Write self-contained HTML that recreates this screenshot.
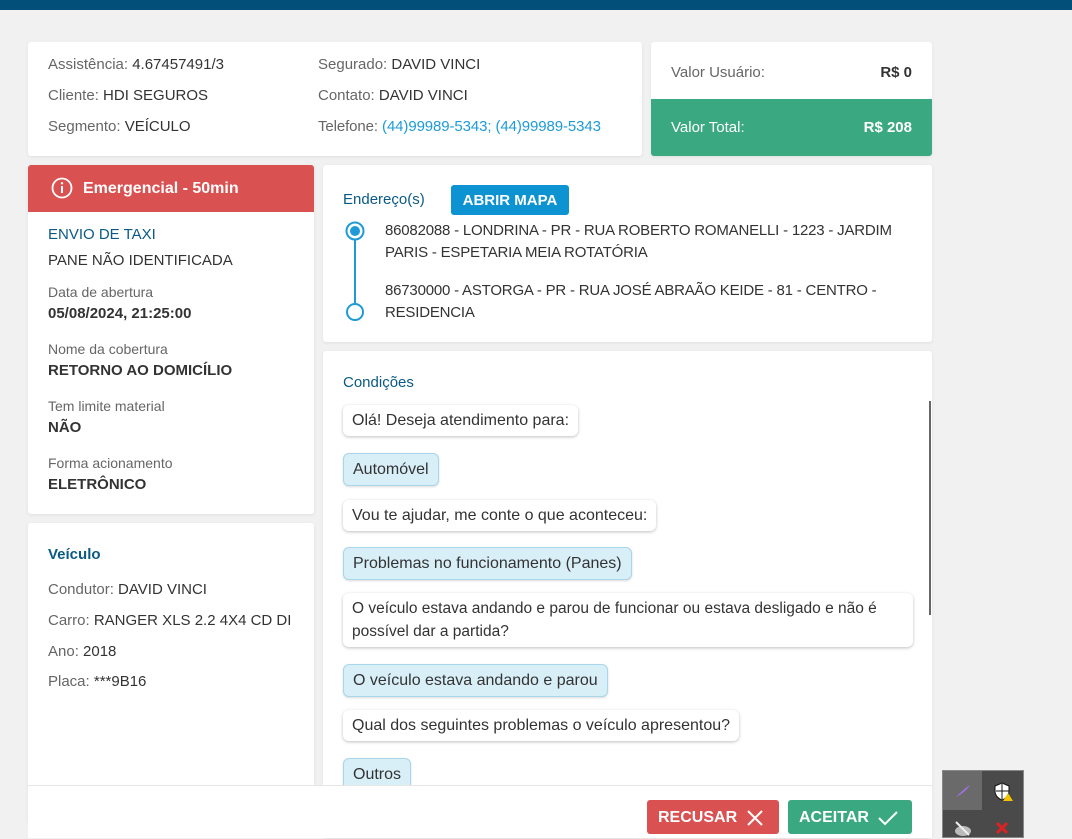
<!DOCTYPE html>
<html><head><meta charset="utf-8"><style>
*{box-sizing:border-box;margin:0;padding:0}
body{width:1072px;height:838px;overflow:hidden;background:#f1f1f1;font-family:"Liberation Sans",sans-serif;color:#333;font-size:15px;position:relative}
.top{position:absolute;left:0;top:0;width:1072px;height:10px;background:#02507a}
.card{position:absolute;background:#fff;border-radius:3px;box-shadow:0 1px 3px rgba(0,0,0,.08)}
.g{color:#666}
.abs{position:absolute;white-space:nowrap}
.blue{color:#0a5a85}
.lbl{font-size:14px;color:#666}
.val{font-size:15px;color:#333;font-weight:bold}
.bub{position:absolute;left:20px;background:#fff;border-radius:6px;box-shadow:0 1px 3px rgba(0,0,0,.25);padding:0 9px;font-size:16px;line-height:31px;color:#333;white-space:nowrap}
.bub.b{background:#d9eff8;border:1px solid #a9d6ea;box-shadow:0 1px 2px rgba(0,0,0,.15)}
.btn{position:absolute;top:800px;height:34px;border-radius:3px;color:#fff;font-weight:bold;font-size:16px;line-height:36px;padding-left:11px}
</style></head><body>
<div class="top"></div>
<div class="card" style="left:28px;top:42px;width:614px;height:114px">
<div class="abs g" style="left:20px;top:14px">Assistência: <span style="color:#333">4.67457491/3</span></div>
<div class="abs g" style="left:20px;top:45px">Cliente: <span style="color:#333">HDI SEGUROS</span></div>
<div class="abs g" style="left:20px;top:76px">Segmento: <span style="color:#333">VEÍCULO</span></div>
<div class="abs g" style="left:290px;top:14px">Segurado: <span style="color:#333">DAVID VINCI</span></div>
<div class="abs g" style="left:290px;top:45px">Contato: <span style="color:#333">DAVID VINCI</span></div>
<div class="abs g" style="left:290px;top:76px;letter-spacing:-.1px">Telefone: <span style="color:#1e9bd7">(44)99989-5343; (44)99989-5343</span></div>
</div>
<div class="card" style="left:651px;top:42px;width:281px;height:114px;overflow:hidden">
<div class="abs g" style="left:20px;top:22px">Valor Usuário:</div>
<div class="abs" style="right:20px;top:22px;font-weight:bold">R$ 0</div>
<div style="position:absolute;left:0;top:57px;width:281px;height:57px;background:#3aa981"></div>
<div class="abs" style="left:20px;top:77px;color:#fff">Valor Total:</div>
<div class="abs" style="right:20px;top:77px;color:#fff;font-weight:bold">R$ 208</div>
</div>
<div class="card" style="left:28px;top:165px;width:286px;height:349px;overflow:hidden">
<div style="position:absolute;left:0;top:0;width:286px;height:47px;background:#da5151"></div>
<svg class="abs" style="left:23px;top:12px" width="22" height="22" viewBox="0 0 22 22"><circle cx="11" cy="11" r="9.5" fill="none" stroke="#fff" stroke-width="1.8"/><rect x="10" y="9" width="2" height="7" fill="#fff"/><circle cx="11" cy="6.3" r="1.2" fill="#fff"/></svg>
<div class="abs" style="left:55px;top:15px;color:#fff;font-weight:bold;font-size:16px">Emergencial - 50min</div>
<div class="abs blue" style="left:20px;top:61px;font-size:15px">ENVIO DE TAXI</div>
<div class="abs" style="left:20px;top:87px">PANE NÃO IDENTIFICADA</div>
<div class="abs lbl" style="left:20px;top:119px">Data de abertura</div>
<div class="abs val" style="left:20px;top:140px">05/08/2024, 21:25:00</div>
<div class="abs lbl" style="left:20px;top:176px">Nome da cobertura</div>
<div class="abs val" style="left:20px;top:197px">RETORNO AO DOMICÍLIO</div>
<div class="abs lbl" style="left:20px;top:233px">Tem limite material</div>
<div class="abs val" style="left:20px;top:254px">NÃO</div>
<div class="abs lbl" style="left:20px;top:290px">Forma acionamento</div>
<div class="abs val" style="left:20px;top:311px">ELETRÔNICO</div>
</div>
<div class="card" style="left:28px;top:523px;width:286px;height:300px">
<div class="abs blue" style="left:20px;top:23px;font-weight:bold">Veículo</div>
<div class="abs g" style="left:20px;top:58px">Condutor: <span style="color:#333">DAVID VINCI</span></div>
<div class="abs g" style="left:20px;top:89px">Carro: <span style="color:#333">RANGER XLS 2.2 4X4 CD DI</span></div>
<div class="abs g" style="left:20px;top:120px">Ano: <span style="color:#333">2018</span></div>
<div class="abs g" style="left:20px;top:150px">Placa: <span style="color:#333">***9B16</span></div>
</div>
<div class="card" style="left:323px;top:165px;width:609px;height:177px">
<div class="abs blue" style="left:20px;top:26px">Endereço(s)</div>
<div class="abs" style="left:128px;top:20px;height:30px;width:118px;background:#0d93d2;border-radius:3px;color:#fff;font-weight:bold;font-size:15px;line-height:31px;text-align:center">ABRIR MAPA</div>
<svg class="abs" style="left:22px;top:56px" width="22" height="102"><circle cx="10" cy="10" r="8.5" fill="none" stroke="#1e9bd7" stroke-width="2"/><circle cx="10" cy="10" r="5" fill="#1e9bd7"/><line x1="10" y1="19" x2="10" y2="82" stroke="#1e9bd7" stroke-width="2"/><circle cx="10" cy="91" r="8" fill="none" stroke="#1e9bd7" stroke-width="2"/></svg>
<div class="abs" style="left:62px;top:55px;line-height:22px;white-space:normal;width:530px;font-size:15px;letter-spacing:-.2px">86082088 - LONDRINA - PR - RUA ROBERTO ROMANELLI - 1223 - JARDIM PARIS - ESPETARIA MEIA ROTATÓRIA</div>
<div class="abs" style="left:62px;top:115px;line-height:22px;white-space:normal;width:530px;font-size:15px;letter-spacing:-.2px">86730000 - ASTORGA - PR - RUA JOSÉ ABRAÃO KEIDE - 81 - CENTRO - RESIDENCIA</div>
</div>
<div class="card" style="left:323px;top:351px;width:609px;height:487px;overflow:hidden">
<div class="abs blue" style="left:20px;top:23px">Condições</div>
<div class="bub" style="top:54px">Olá! Deseja atendimento para:</div>
<div class="bub b" style="top:102px">Automóvel</div>
<div class="bub" style="top:149px">Vou te ajudar, me conte o que aconteceu:</div>
<div class="bub b" style="top:196px">Problemas no funcionamento (Panes)</div>
<div class="bub" style="top:242px;white-space:normal;width:570px;line-height:23px;padding:4px 9px;font-size:15.5px">O veículo estava andando e parou de funcionar ou estava desligado e não é possível dar a partida?</div>
<div class="bub b" style="top:313px">O veículo estava andando e parou</div>
<div class="bub" style="top:359px">Qual dos seguintes problemas o veículo apresentou?</div>
<div class="bub b" style="top:407px">Outros</div>
<div style="position:absolute;left:606px;top:50px;width:2px;height:214px;background:#666"></div>
</div>
<div style="position:absolute;left:28px;top:785px;width:904px;height:53px;background:#fff;border-top:1px solid #e6e6e6"></div>
<div class="btn" style="left:647px;width:132px;background:#da5151">RECUSAR<svg style="position:absolute;left:100px;top:10px" width="16" height="16"><path d="M1 1L15 15M15 1L1 15" stroke="#fff" stroke-width="2"/></svg></div>
<div class="btn" style="left:788px;width:124px;background:#3aa981">ACEITAR<svg style="position:absolute;left:90px;top:10px" width="20" height="16"><path d="M1 8L7 14L19 2" stroke="#fff" stroke-width="2" fill="none"/></svg></div>
<div style="position:absolute;left:942px;top:770px;width:82px;height:68px;background:#4a4a4a;border:1px solid #888">
<div style="position:absolute;left:0;top:0;width:39px;height:39px;background:#6a6a6a"></div>
<svg style="position:absolute;left:10px;top:10px" width="20" height="20"><path d="M3 16C7 12 12 7 17 4C14 9 9 13 3 16Z" fill="#a070e0"/></svg>
<svg style="position:absolute;left:50px;top:10px" width="22" height="22"><path d="M9 2L16 5V10C16 15 12 18 9 19C6 18 2 15 2 10V5Z" fill="#fff" stroke="#111"/><path d="M9 3V18M3 10H16" stroke="#111"/><path d="M15 12L20 20H10Z" fill="#f2c200"/></svg>
<svg style="position:absolute;left:50px;top:48px" width="20" height="20"><path d="M4 4L14 14M14 4L4 14" stroke="#d22" stroke-width="3"/></svg>
<svg style="position:absolute;left:10px;top:48px" width="20" height="20"><ellipse cx="10" cy="12" rx="8" ry="5" fill="#bbb"/><path d="M3 3L16 16" stroke="#eee" stroke-width="2"/></svg>
</div>
</body></html>
